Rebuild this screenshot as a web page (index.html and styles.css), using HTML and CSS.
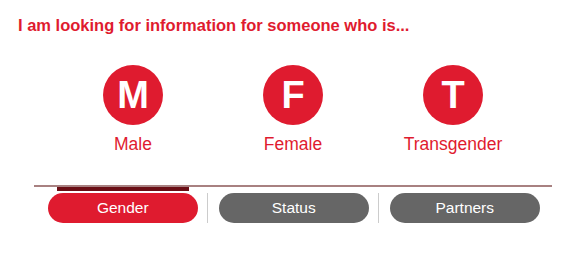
FILE: index.html
```html
<!DOCTYPE html>
<html>
<head>
<meta charset="utf-8">
<link rel="stylesheet" href="styles.css">
</head>
<body>
<h1 class="title">I am looking for information for someone who is...</h1>
<div class="options">
  <div class="option"><div class="circle">M</div><div class="label">Male</div></div>
  <div class="option"><div class="circle">F</div><div class="label">Female</div></div>
  <div class="option"><div class="circle">T</div><div class="label">Transgender</div></div>
</div>
<div class="tabs">
  <div class="indicator"></div>
  <div class="tabrow">
    <div class="pill active">Gender</div>
    <div class="sep"></div>
    <div class="pill">Status</div>
    <div class="sep"></div>
    <div class="pill">Partners</div>
  </div>
</div>
</body>
</html>
```
FILE: styles.css
```css
html, body { margin: 0; padding: 0; background: #fff; }
body { font-family: "Liberation Sans", Arial, sans-serif; width: 570px; height: 258px; overflow: hidden; }
.title {
  margin: 16px 0 0 18px;
  font-size: 16.5px;
  line-height: 19px;
  font-weight: bold;
  color: #df1b2f;
}
.options {
  display: flex;
  margin: 30px 0 0 53px;
}
.option {
  width: 160px;
  display: flex;
  flex-direction: column;
  align-items: center;
}
.circle {
  width: 60px;
  height: 60px;
  border-radius: 50%;
  background: #df1b2f;
  color: #fff;
  font-weight: bold;
  font-size: 38px;
  display: flex;
  align-items: center;
  justify-content: center;
  line-height: 1;
}
.label {
  margin-top: 8.5px;
  font-size: 17.5px;
  line-height: 20px;
  color: #df1b2f;
}
.tabs {
  margin: 31.5px 18px 0 34px;
  border-top: 2px solid #a88181;
}
.indicator {
  margin-left: 23px;
  width: 132px;
  height: 4px;
  background: #6a0e15;
}
.tabrow {
  display: flex;
  align-items: stretch;
  margin-top: 2px;
  padding-left: 14px;
}
.pill {
  width: 149.5px;
  height: 30px;
  border-radius: 15px;
  background: #666666;
  color: #fff;
  font-size: 15.5px;
  display: flex;
  align-items: center;
  justify-content: center;
}
.pill.active { background: #df1b2f; }
.sep {
  width: 1px;
  background: #cccccc;
  margin: 0 11.5px 0 9px;
}
```
